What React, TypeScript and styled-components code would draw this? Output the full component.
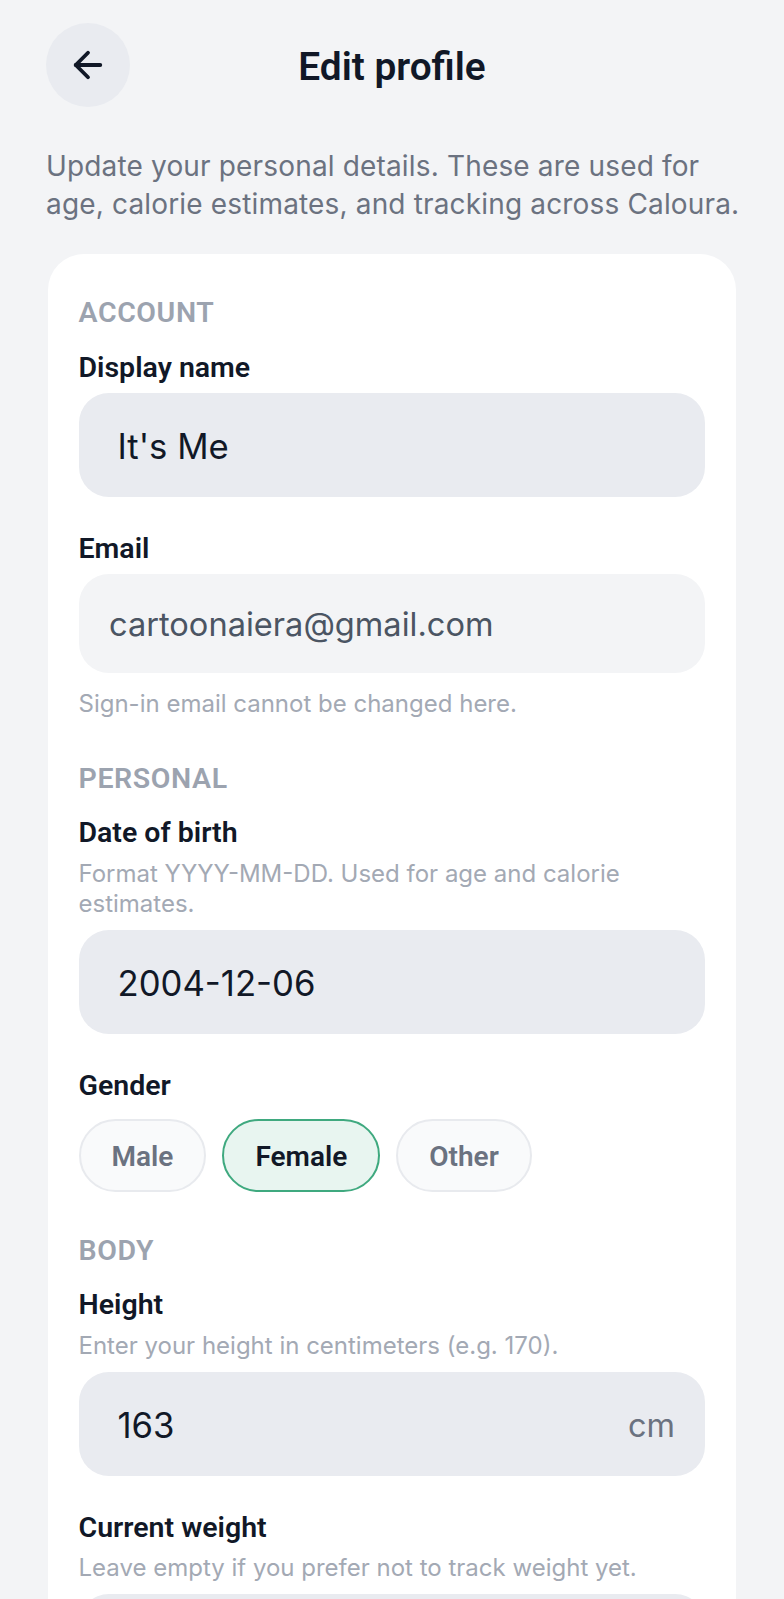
import * as React from 'react';
import styled, { createGlobalStyle } from 'styled-components';

const GlobalStyle = createGlobalStyle`
	html, body {
		margin: 0;
		padding: 0;
		background: #f3f4f6;
	}
	body {
		font-family: 'Inter', 'Liberation Sans', sans-serif;
		overflow: hidden;
	}
`;

const App = () => (
	<>
		<GlobalStyle />
		<Page>
			<Header>
				<BackButton type="button" aria-label="Back">
					<svg width="42" height="42" viewBox="0 0 24 24" fill="none" stroke="#111827" strokeWidth="2.2" strokeLinecap="round" strokeLinejoin="round">
						<path d="M19 12H5" />
						<path d="M12 19l-7-7 7-7" />
					</svg>
				</BackButton>
				<Title>Edit profile</Title>
			</Header>
			<Intro>Update your personal details. These are used for age, calorie estimates, and tracking across Caloura.</Intro>
			<Card>
				<SectionTitle>ACCOUNT</SectionTitle>
				<Label $top={22}>Display name</Label>
				<Field $top={9}>
					<FieldValue>It's Me</FieldValue>
				</Field>
				<Label $top={36}>Email</Label>
				<ReadonlyField>cartoonaiera@gmail.com</ReadonlyField>
				<Hint $top={16}>Sign-in email cannot be changed here.</Hint>

				<SectionTitle $top={43}>PERSONAL</SectionTitle>
				<Label>Date of birth</Label>
				<Hint>Format YYYY-MM-DD. Used for age and calorie estimates.</Hint>
				<Field $top={11}>
					<FieldValue>2004-12-06</FieldValue>
				</Field>
				<Label $top={36}>Gender</Label>
				<Pills>
					<Pill>Male</Pill>
					<Pill $active>Female</Pill>
					<Pill>Other</Pill>
				</Pills>

				<SectionTitle $top={42}>BODY</SectionTitle>
				<Label>Height</Label>
				<Hint>Enter your height in centimeters (e.g. 170).</Hint>
				<Field $top={11}>
					<FieldValue>163</FieldValue>
					<Unit>cm</Unit>
				</Field>
				<Label $top={36}>Current weight</Label>
				<Hint $top={9}>Leave empty if you prefer not to track weight yet.</Hint>
				<Field $top={11} />
			</Card>
		</Page>
	</>
);

export default App;

const Page = styled.div`
	width: 784px;
	height: 1599px;
	overflow: hidden;
	box-sizing: border-box;
	padding: 23px 46px 0 46px;
`;

const Header = styled.header`
	display: flex;
	align-items: center;
	height: 84px;
`;

const BackButton = styled.button`
	width: 84px;
	height: 84px;
	border: none;
	border-radius: 50%;
	background: #e9ebf0;
	padding: 0;
	display: flex;
	align-items: center;
	justify-content: center;
`;

const Title = styled.h1`
	flex: 1;
	margin: 0 84px 0 0;
	padding-top: 4px;
	text-align: center;
	font-family: 'Roboto', sans-serif;
	font-size: 38.8px;
	font-weight: 600;
	line-height: 44px;
	color: #111827;
`;

const Intro = styled.p`
	margin: 40px -10px 0 0;
	font-size: 28px;
	letter-spacing: 0.16px;
	line-height: 38px;
	color: #6b7280;
`;

const Card = styled.section`
	margin: 31px 0 0 2px;
	width: 688px;
	box-sizing: border-box;
	padding: 42px 31px 0 30.5px;
	background: #fff;
	border-radius: 36px 36px 0 0;
	min-height: 1400px;
`;

const SectionTitle = styled.h2<{ $top?: number }>`
	margin: ${(p) => p.$top ?? 0}px 0 0;
	font-family: 'Roboto', sans-serif;
	font-size: 28.5px;
	font-weight: 600;
	letter-spacing: 0.6px;
	line-height: 34px;
	color: #9ca3af;
`;

const Label = styled.div<{ $top?: number }>`
	margin: ${(p) => p.$top ?? 21}px 0 0;
	font-family: 'Roboto', sans-serif;
	font-size: 28.5px;
	font-weight: 600;
	line-height: 32px;
	color: #111827;
`;

const Field = styled.div<{ $top?: number }>`
	margin-top: ${(p) => p.$top ?? 10}px;
	height: 104px;
	box-sizing: border-box;
	padding: 2px 30px 0 39px;
	display: flex;
	align-items: center;
	justify-content: space-between;
	background: #e9ebf0;
	border-radius: 30px;
`;

const FieldValue = styled.span`
	font-size: 34.7px;
	color: #111827;
`;

const Unit = styled.span`
	font-size: 32.5px;
	color: #6b7280;
`;

const ReadonlyField = styled.div`
	margin-top: 9px;
	height: 99px;
	box-sizing: border-box;
	padding: 0 30.5px;
	display: flex;
	align-items: center;
	background: #f3f4f6;
	border-radius: 30px;
	font-size: 32.6px;
	color: #4b5563;
`;

const Hint = styled.p<{ $top?: number }>`
	margin: ${(p) => p.$top ?? 10}px 0 0;
	font-size: 24px;
	line-height: 30px;
	color: #a3a9b4;
`;

const Pills = styled.div`
	display: flex;
	gap: 16px;
	margin-top: 17px;
`;

const Pill = styled.div<{ $active?: boolean }>`
	height: 73px;
	box-sizing: border-box;
	padding: 2px 31px 0;
	display: flex;
	align-items: center;
	border-radius: 37px;
	border: 2px solid ${(p) => (p.$active ? '#3fa97f' : '#e8eaee')};
	background: ${(p) => (p.$active ? '#e8f5f0' : '#f9fafb')};
	font-family: 'Roboto', sans-serif;
	font-size: 28px;
	font-weight: 600;
	color: ${(p) => (p.$active ? '#111827' : '#6b7280')};
`;
